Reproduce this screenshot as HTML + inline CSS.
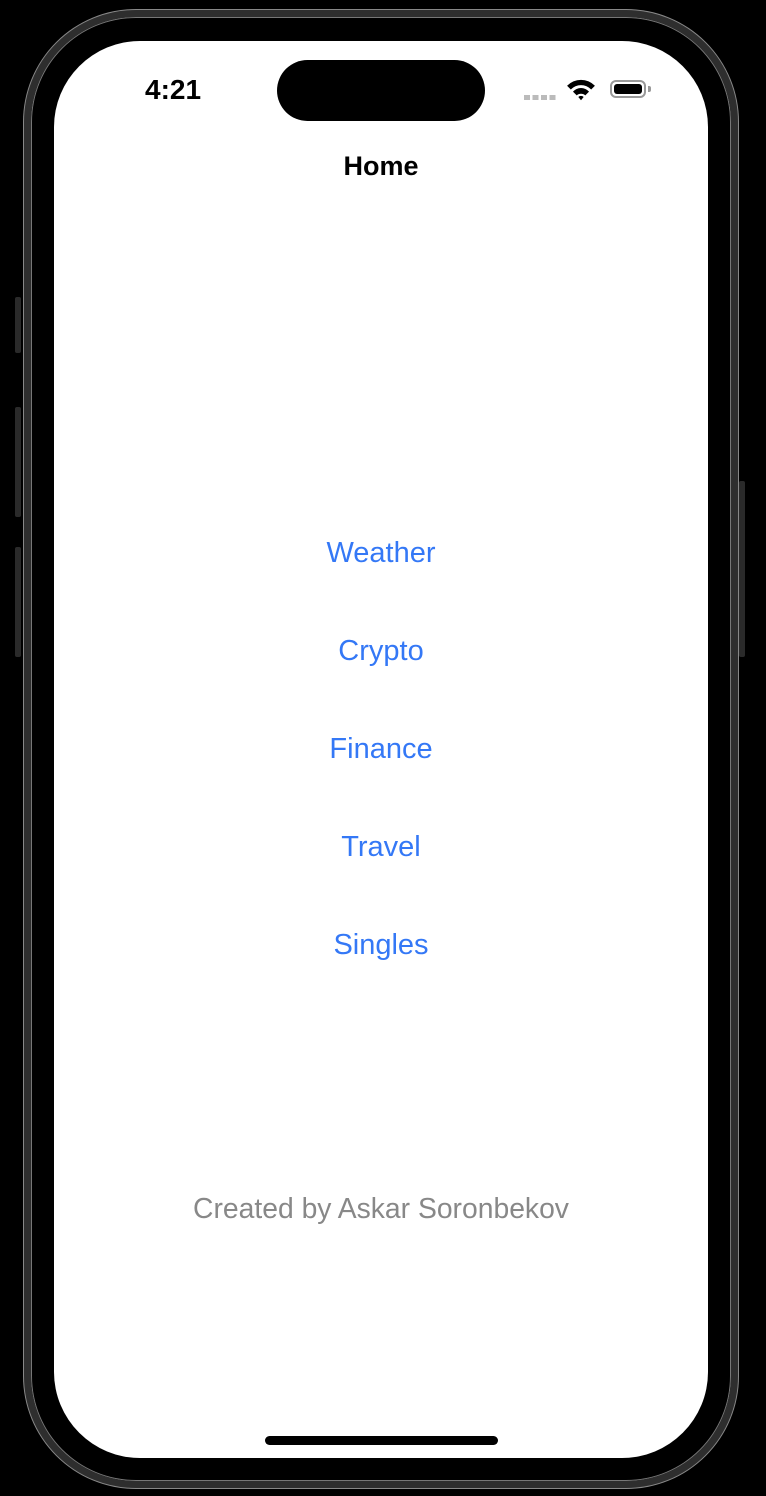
<!DOCTYPE html>
<html><head><style>
body{margin:0;width:766px;height:1496px;background:#000;position:relative;overflow:hidden;font-family:"Liberation Sans",sans-serif}
.frame{position:absolute;left:24px;top:10px;width:714px;height:1478px;border-radius:112px;background:#000;box-sizing:border-box;border:7px solid #2e2e2e;box-shadow:inset 0 0 0 1px #777, 0 0 0 1px #888}
.btn{position:absolute;background:#2a2a2a;width:6px;border-radius:2px}
.screen{position:absolute;left:54px;top:41px;width:654px;height:1417px;border-radius:86px;background:#fff;overflow:hidden}
.island{position:absolute;left:223px;top:19px;width:208px;height:61px;border-radius:31px;background:#000}
.t{position:absolute;left:0;width:654px;text-align:center}
.link{color:#3478f6;font-size:29px}
</style></head><body>
<div class="btn" style="left:15px;top:297px;height:56px"></div>
<div class="btn" style="left:15px;top:407px;height:110px"></div>
<div class="btn" style="left:15px;top:547px;height:110px"></div>
<div class="btn" style="left:739px;top:481px;height:176px"></div>
<div class="frame"></div>
<div class="screen">
<div class="island"></div>
<div style="position:absolute;left:91px;top:33px;font-size:28px;font-weight:bold;color:#000">4:21</div>
<div style="position:absolute;left:470px;top:54px;width:32px;height:5px;background:repeating-linear-gradient(90deg,#bbb 0 6px,transparent 6px 8.5px)"></div>
<svg style="position:absolute;left:512px;top:36px" width="30" height="24" viewBox="0 0 28 22"><path d="M1 8 A18 18 0 0 1 27 8 L23.5 11.5 A13 13 0 0 0 4.5 11.5Z M6.5 13.5 A10 10 0 0 1 21.5 13.5 L18 17 A6 6 0 0 0 10 17Z M11.5 18.5 A3.5 3.5 0 0 1 16.5 18.5 L14 21.5Z" fill="#000"/></svg>
<div style="position:absolute;left:556px;top:39px;width:36px;height:18px;border:2px solid #999;border-radius:6px;box-sizing:border-box;padding:2px"><div style="background:#000;width:100%;height:100%;border-radius:3px"></div></div>
<div style="position:absolute;left:594px;top:45px;width:3px;height:6px;background:#999;border-radius:0 2px 2px 0"></div>
<div class="t" style="top:110px;font-size:27px;font-weight:bold;color:#000">Home</div>
<div class="t link" style="top:496px">Weather</div>
<div class="t link" style="top:594px">Crypto</div>
<div class="t link" style="top:692px">Finance</div>
<div class="t link" style="top:790px">Travel</div>
<div class="t link" style="top:888px">Singles</div>
<div class="t" style="top:1151px;font-size:28.3px;color:#888">Created by Askar Soronbekov</div>
<div style="position:absolute;left:211px;top:1395px;width:233px;height:9px;border-radius:5px;background:#000"></div>
</div>
</body></html>
